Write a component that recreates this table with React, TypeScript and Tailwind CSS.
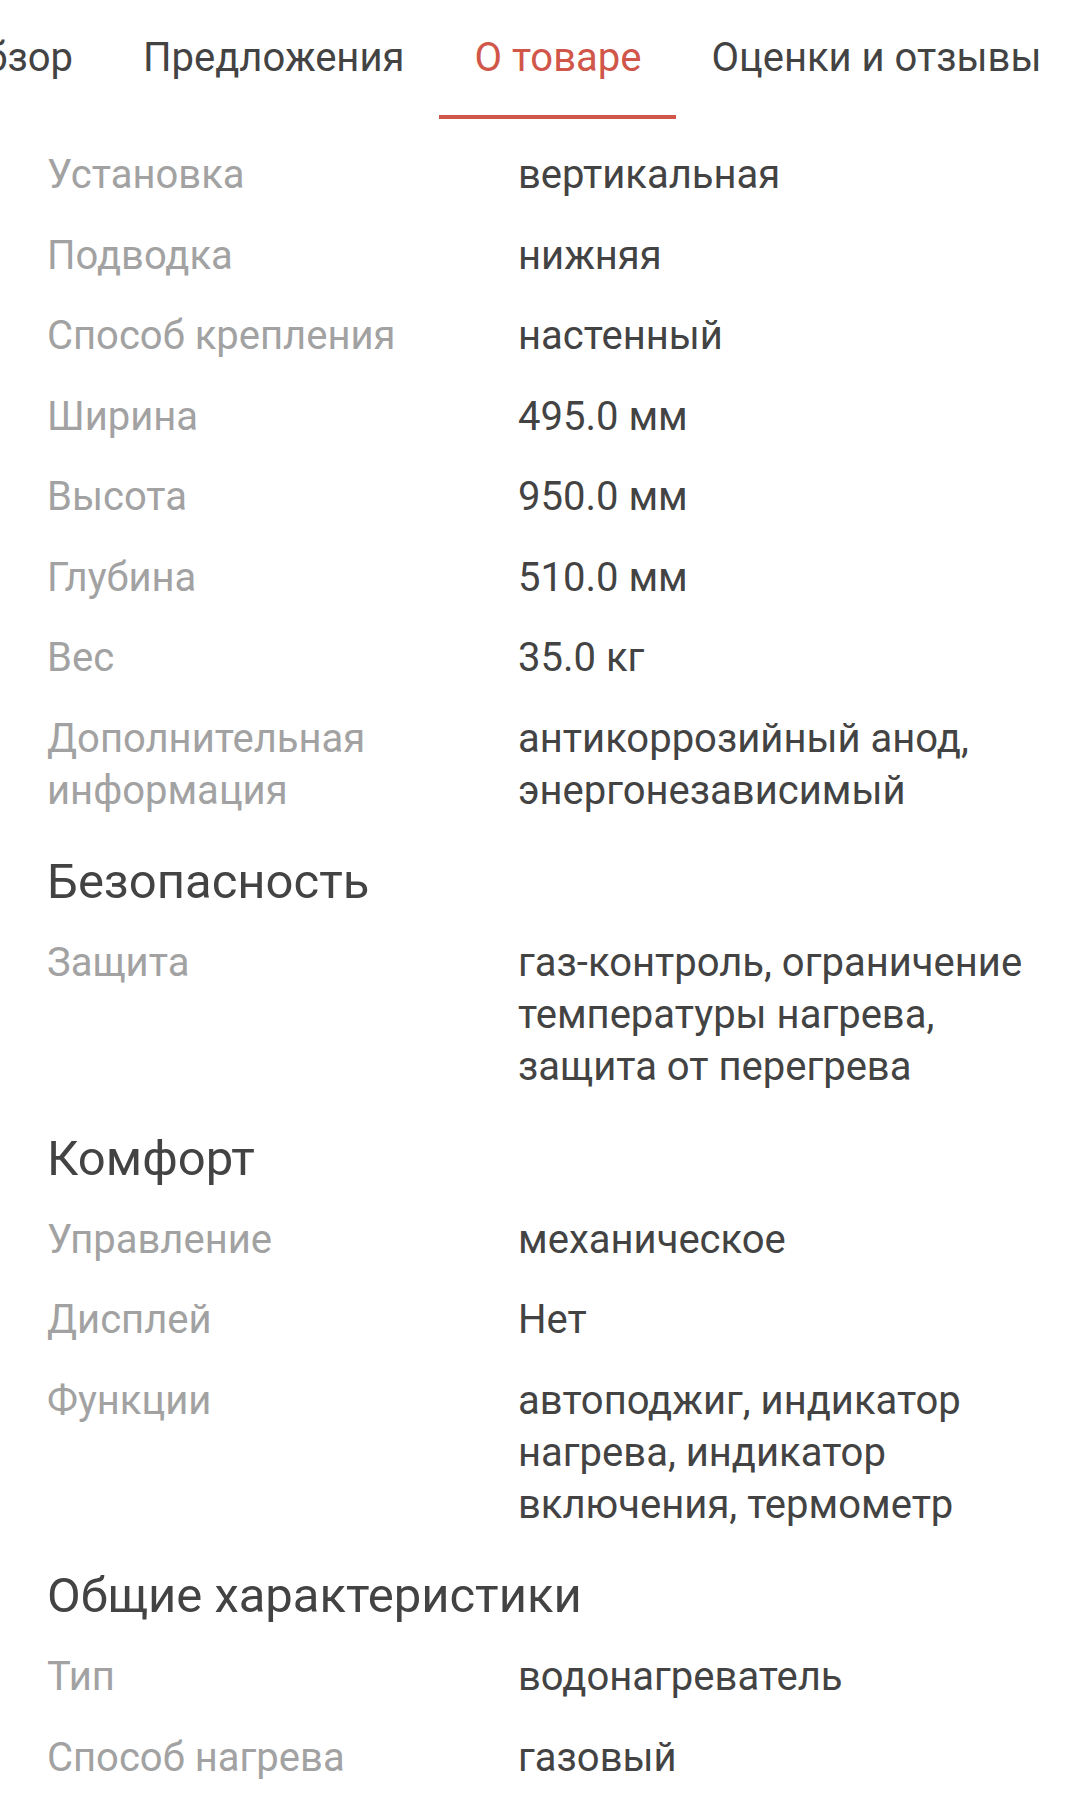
const tabs = ["Обзор", "Предложения", "О товаре", "Оценки и отзывы"]

type Row = { label: string; value: string }
type Section = { title?: string; rows: Row[] }

const sections: Section[] = [
  {
    rows: [
      { label: "Установка", value: "вертикальная" },
      { label: "Подводка", value: "нижняя" },
      { label: "Способ крепления", value: "настенный" },
      { label: "Ширина", value: "495.0 мм" },
      { label: "Высота", value: "950.0 мм" },
      { label: "Глубина", value: "510.0 мм" },
      { label: "Вес", value: "35.0 кг" },
      { label: "Дополнительная информация", value: "антикоррозийный анод, энергонезависимый" },
    ],
  },
  {
    title: "Безопасность",
    rows: [{ label: "Защита", value: "газ-контроль, ограничение температуры нагрева, защита от перегрева" }],
  },
  {
    title: "Комфорт",
    rows: [
      { label: "Управление", value: "механическое" },
      { label: "Дисплей", value: "Нет" },
      { label: "Функции", value: "автоподжиг, индикатор нагрева, индикатор включения, термометр" },
    ],
  },
  {
    title: "Общие характеристики",
    rows: [
      { label: "Тип", value: "водонагреватель" },
      { label: "Способ нагрева", value: "газовый" },
    ],
  },
]

function Tabs() {
  const active = "О товаре"
  return (
    <div className="flex overflow-hidden whitespace-nowrap">
      {tabs.map((t, i) => {
        const isActive = t === active
        return (
          <div
            key={t}
            className={`flex shrink-0 flex-col ${i === 0 ? "w-[108px] items-end" : ""}`}
          >
            <div
              className={`flex px-[35px] pt-[36px] pb-[35px] text-[40px] leading-[44px] ${
                i === 0 ? "justify-end" : ""
              } ${isActive ? "text-[#d1564a]" : "text-[#434343]"}`}
            >
              {t}
            </div>
            <div className={`h-[4px] w-full ${isActive ? "bg-[#d1564a]" : ""}`} />
          </div>
        )
      })}
    </div>
  )
}

export default function App() {
  return (
    <div className="min-h-[1810px] bg-white font-['Roboto',sans-serif]">
      <Tabs />
      <div className="pt-[14px] pl-[47px] pr-[40px]">
        {sections.map((s, si) => (
          <div key={si}>
            {s.title && (
              <h2 className="pt-[24px] pb-[11px] text-[49px] leading-[57px] text-[#434343]">{s.title}</h2>
            )}
            {s.rows.map((r) => (
              <div key={r.label} className="grid grid-cols-[471px_1fr] pt-[16px] pb-[12.5px] text-[40px] leading-[52px]">
                <div className="pr-[24px] text-[#a2a2a2]">{r.label}</div>
                <div className="text-[#434343]">{r.value}</div>
              </div>
            ))}
          </div>
        ))}
      </div>
    </div>
  )
}
